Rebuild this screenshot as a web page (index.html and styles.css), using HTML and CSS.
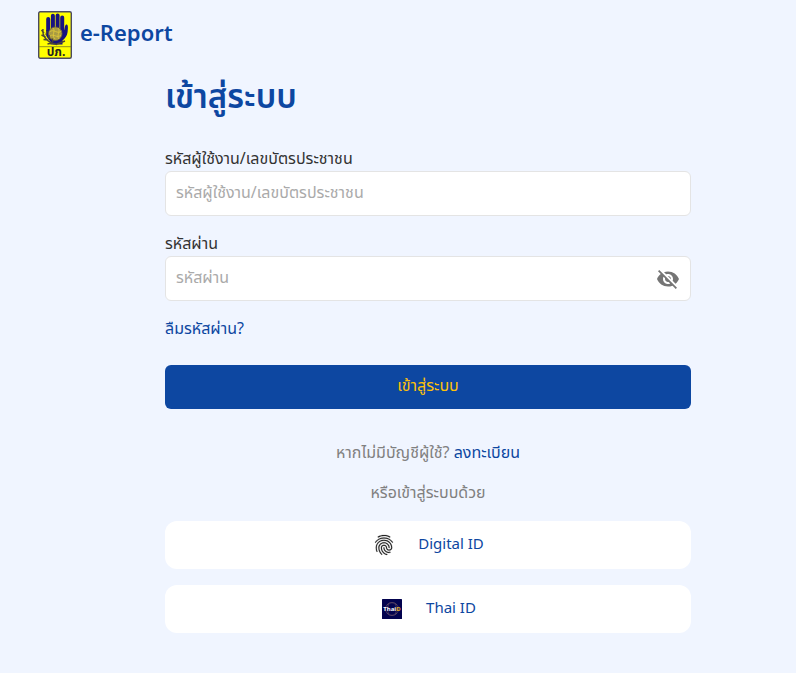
FILE: index.html
```html
<!DOCTYPE html>
<html lang="th">
<head>
<meta charset="utf-8">
<meta name="viewport" content="width=device-width, initial-scale=1">
<title>e-Report</title>
<link rel="stylesheet" href="styles.css">
</head>
<body>
<header class="brand">
  <svg class="brand-logo" viewBox="0 0 34 48" aria-hidden="true">
    <rect x=".7" y=".7" width="32.6" height="46.6" rx="1.5" fill="#ff0" stroke="#4b4a60" stroke-width="1.4"/>
    <path d="M1 35.700h32" stroke="#77762a" stroke-width=".8"/>
    <g stroke="#17127f" stroke-width="4" stroke-linecap="round">
      <path d="M10.200 8v16M14.900 4.800v18M19.600 4.400v18M24.200 6.500v18"/>
    </g>
    <path d="M8.200 19h18c.7-3 .8-5.500 2.400-5.500 1.800 0 1.400 4.500 1 7.500-.5 4-2.300 6-5.100 8.500V33.500H12.500v-3C9.500 28 8.200 25 8.200 22z" fill="#17127f"/>
    <circle cx="17.300" cy="22.700" r="6.800" fill="#a99b42" stroke="#6b6133" stroke-width=".7"/>
    <path d="M11.500 21c4-4 8 3 12-1M12 25c4-3 7 3 11-1M15 17c3 3-2 7 2 11M20 17c3 4-2 7 1 11" fill="none" stroke="#e2ca39" stroke-width=".8"/>
    <path d="M5 18c-1 7 4 14 14 15.500M6 22l-2.500-3M7.500 26l-4-2M10 29l-4.500-.5M14 32l-4.500 1M8 24l1-4M11 28v-4M15 31l-1-3.500M19 33l8-3" fill="none" stroke="#4c4534" stroke-width="1.400"/>
    <text class="emblem-text" x="18" y="45" text-anchor="middle">ปภ.</text>
  </svg>
  <span class="brand-name">e-Report</span>
</header>
<main class="page">
  <section class="login">
    <h1 class="title">เข้าสู่ระบบ</h1>
    <form class="form">
      <div class="field">
        <label class="label" for="user">รหัสผู้ใช้งาน/เลขบัตรประชาชน</label>
        <input class="input" id="user" type="text" placeholder="รหัสผู้ใช้งาน/เลขบัตรประชาชน">
      </div>
      <div class="field">
        <label class="label" for="password">รหัสผ่าน</label>
        <div class="input-wrap">
          <input class="input" id="password" type="password" placeholder="รหัสผ่าน">
          <button class="toggle" type="button" aria-label="แสดงรหัสผ่าน">
            <svg class="icon" viewBox="0 0 24 24" fill="#757575" aria-hidden="true"><path d="M12 7c2.760 0 5 2.240 5 5 0 .65-.13 1.260-.36 1.830l2.920 2.920c1.510-1.260 2.700-2.890 3.430-4.750-1.730-4.390-6-7.500-11-7.500-1.400 0-2.740.25-3.980.7l2.160 2.160C10.740 7.130 11.350 7 12 7zM2 4.270l2.280 2.280.46.46C3.080 8.300 1.780 10.020 1 12c1.730 4.390 6 7.500 11 7.500 1.550 0 3.030-.3 4.380-.84l.42.42L19.730 22 21 20.730 3.270 3 2 4.270zM7.530 9.800l1.550 1.550c-.05.21-.08.43-.08.65 0 1.660 1.340 3 3 3 .22 0 .44-.03.65-.08l1.550 1.550c-.67.33-1.410.53-2.200.53-2.760 0-5-2.240-5-5 0-.79.2-1.530.53-2.200zm4.310-.78l3.150 3.150.02-.16c0-1.660-1.340-3-3-3l-.17.01z"/></svg>
          </button>
        </div>
      </div>
      <a class="link forgot" href="#">ลืมรหัสผ่าน?</a>
      <button class="submit" type="submit">เข้าสู่ระบบ</button>
    </form>
    <p class="note">หากไม่มีบัญชีผู้ใช้? <a class="link" href="#">ลงทะเบียน</a></p>
    <p class="note">หรือเข้าสู่ระบบด้วย</p>
    <div class="providers">
      <button class="provider" type="button">
        <svg class="icon" viewBox="0 0 24 24" fill="#222" aria-hidden="true"><path d="M17.810 4.470c-.08 0-.16-.02-.23-.06C15.660 3.420 14 3 12.010 3c-1.980 0-3.860.47-5.570 1.410-.24.13-.54.04-.68-.2-.13-.24-.04-.55.2-.68C7.820 2.520 9.860 2 12.010 2c2.130 0 3.990.47 6.030 1.520.25.13.34.43.21.67-.09.18-.26.28-.44.28zM3.500 9.720c-.1 0-.2-.03-.29-.09-.23-.16-.28-.47-.12-.7.99-1.400 2.250-2.500 3.750-3.270C9.980 4.040 14 4.030 17.150 5.650c1.500.77 2.760 1.860 3.750 3.250.16.22.11.54-.12.7-.23.16-.54.11-.7-.12-.9-1.260-2.040-2.250-3.390-2.940-2.870-1.470-6.540-1.470-9.400.01-1.360.7-2.500 1.700-3.400 2.960-.08.14-.23.21-.39.21zm6.250 12.070c-.13 0-.26-.05-.35-.15-.87-.87-1.340-1.430-2.010-2.640-.69-1.230-1.050-2.730-1.050-4.340 0-2.970 2.540-5.390 5.660-5.390s5.660 2.420 5.660 5.390c0 .28-.22.5-.5.5s-.5-.22-.5-.5c0-2.420-2.090-4.390-4.660-4.390s-4.660 1.970-4.660 4.390c0 1.440.32 2.770.93 3.850.64 1.150 1.080 1.640 1.850 2.420.19.2.19.51 0 .71-.11.1-.24.15-.37.15zm7.170-1.850c-1.190 0-2.240-.3-3.100-.89-1.490-1.010-2.380-2.650-2.380-4.390 0-.28.22-.5.5-.5s.5.22.5.5c0 1.410.72 2.740 1.940 3.560.71.48 1.540.71 2.540.71.24 0 .64-.03 1.040-.1.27-.05.53.13.58.41.05.27-.13.53-.41.58-.57.11-1.070.12-1.210.12zM14.910 22c-.04 0-.09-.01-.13-.02-1.590-.44-2.630-1.030-3.720-2.100-1.400-1.390-2.170-3.240-2.170-5.220 0-1.620 1.380-2.940 3.080-2.940s3.080 1.320 3.080 2.940c0 1.070.93 1.940 2.080 1.940s2.080-.87 2.080-1.940c0-3.770-3.250-6.830-7.250-6.830-2.840 0-5.440 1.580-6.610 4.030-.39.81-.59 1.760-.59 2.800 0 .78.07 2.010.67 3.610.1.26-.03.55-.29.64-.26.1-.55-.04-.64-.29-.49-1.310-.73-2.610-.73-3.960 0-1.200.23-2.290.68-3.240 1.330-2.790 4.280-4.600 7.510-4.600 4.550 0 8.250 3.510 8.250 7.830 0 1.620-1.380 2.940-3.080 2.940s-3.080-1.320-3.080-2.940c0-1.070-.93-1.940-2.080-1.940s-2.080.87-2.080 1.940c0 1.710.66 3.310 1.870 4.510.95.94 1.860 1.460 3.270 1.850.27.07.42.35.35.61-.05.23-.26.38-.47.38z" stroke="#222" stroke-width=".2"/></svg>
        <span>Digital ID</span>
      </button>
      <button class="provider" type="button">
        <svg class="icon" viewBox="0 0 24 24" aria-hidden="true">
          <rect x="2" y="2" width="20" height="20" rx=".5" fill="#03034f"/>
          <g fill="none" stroke="#69536c" stroke-width=".6"><circle cx="12" cy="12" r="6.500"/><path d="M7 8c3-3 7-3 10 0M7 16c3 3 7 3 10 0M9 7c-2 3-2 7 0 10M15 7c2 3 2 7 0 10"/></g>
          <text class="thaid-text" x="12" y="14.200" text-anchor="middle" fill="#fff">Thai<tspan fill="#e6ad2c">D</tspan></text>
        </svg>
        <span>Thai ID</span>
      </button>
    </div>
  </section>
</main>
</body>
</html>
```
FILE: styles.css
```css
* {
  box-sizing: border-box;
}

body {
  margin: 0;
  background: #f0f5ff;
  color: #333;
  font-family: "Noto Sans Thai", "Noto Sans", sans-serif;
  font-size: 16px;
  line-height: 24px;
}

.brand {
  display: flex;
  align-items: center;
  gap: 8px;
  padding: 11px 38px 0;
}

.brand-logo {
  width: 34px;
  height: 48px;
  overflow: visible;
}

.brand-name {
  color: #0d47a1;
  font-size: 22px;
  font-weight: 600;
}

.emblem-text {
  fill: #222;
  font-size: 12px;
  font-weight: 700;
}

.page {
  display: grid;
  grid-template-columns: 165fr 526fr 105fr;
  padding-bottom: 40px;
}

.login {
  grid-column: 2;
  min-width: 0;
}

.title {
  margin: 15px 0 25px;
  color: #0d47a1;
  font-size: 33px;
  font-weight: 600;
  line-height: 48px;
}

.form {
  display: flex;
  flex-direction: column;
  gap: 16px;
}

.field {
  display: flex;
  flex-direction: column;
}

.label {
  line-height: 24px;
}

.input {
  display: block;
  width: 100%;
  height: 45px;
  padding: 0 10px 2px;
  border: 1px solid #e4e4e4;
  border-radius: 6px;
  background: #fff;
  color: #333;
  font: inherit;
}

.input::placeholder {
  color: #aaa;
  opacity: 1;
}

.input-wrap {
  position: relative;
}

.toggle {
  position: absolute;
  top: 11px;
  right: 11px;
  padding: 0;
  border: 0;
  background: none;
  line-height: 0;
  cursor: pointer;
}

.icon {
  width: 24px;
  height: 24px;
}

.link {
  color: #0d47a1;
  text-decoration: none;
}

.forgot {
  align-self: flex-start;
}

.submit {
  height: 44px;
  margin-top: 8px;
  padding: 0 8px 2px;
  border: 0;
  border-radius: 6px;
  background: #0d47a1;
  color: #ffc107;
  font: inherit;
  cursor: pointer;
}

.note {
  margin: 16px 0;
  color: #808080;
  text-align: center;
}

.form + .note {
  margin-top: 32px;
}

.providers {
  display: flex;
  flex-direction: column;
  gap: 16px;
}

.provider {
  display: flex;
  align-items: center;
  justify-content: center;
  gap: 22px;
  height: 48px;
  border: 0;
  border-radius: 12px;
  background: #fff;
  color: #0d47a1;
  font: inherit;
  font-size: 15px;
  cursor: pointer;
}

.thaid-text {
  font-size: 6px;
  font-weight: 700;
}
```
